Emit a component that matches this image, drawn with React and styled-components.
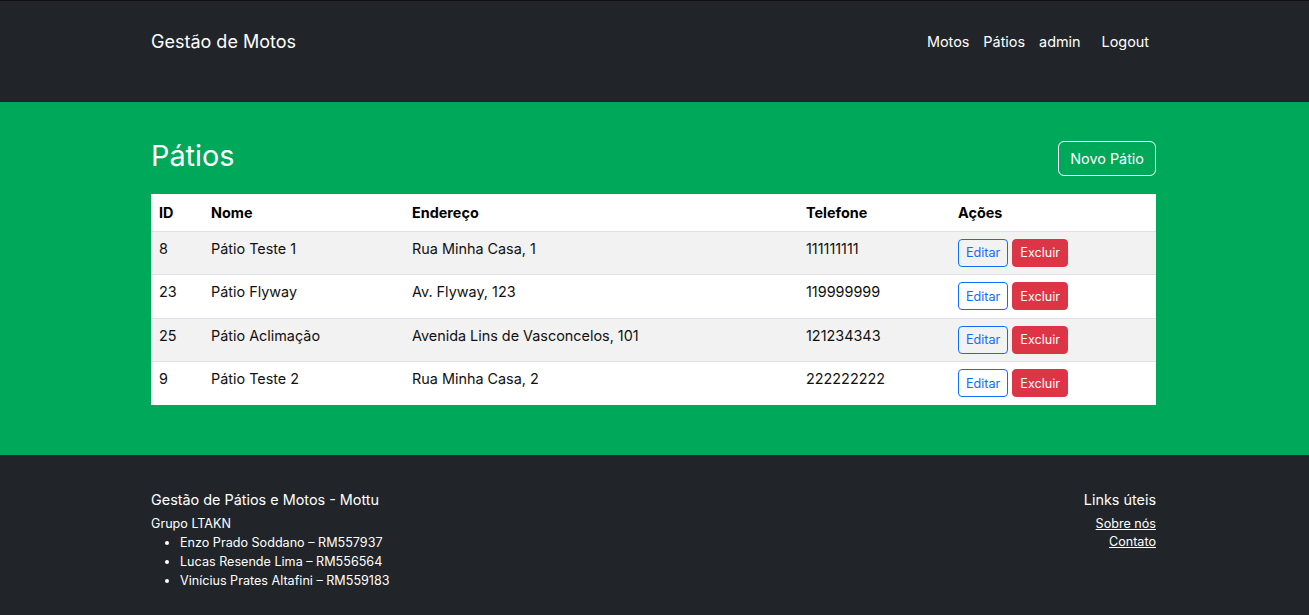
import React from 'react';
import styled, { createGlobalStyle } from 'styled-components';

const GlobalStyle = createGlobalStyle`
  * { box-sizing: border-box; }
  body {
    margin: 0;
    font-family: Inter, "Noto Sans", sans-serif;
    background: #212529;
    color: #212529;
  }
`;

const Header = styled.header`
  background-color: #212529;
  border-top: 1px solid #111;
  height: 102px;
  padding-top: 28px;
`;

const Container = styled.div`
  width: 1005px;
  margin-left: calc(50% - 503.5px);
`;

const NavBar = styled(Container)`
  display: flex;
  align-items: center;
  justify-content: space-between;
  height: 24px;
`;

const Brand = styled.a`
  color: #fff;
  font-size: 18px;
  text-decoration: none;
`;

const NavList = styled.ul`
  list-style: none;
  margin: 0;
  padding: 0;
  display: flex;
  align-items: center;
  gap: 14px;
  margin-right: 7px;
`;

const NavItem = styled.li`
  color: #fff;
  font-size: 14.4px;
  margin-left: ${props => (props.spaced ? '7px' : '0')};
`;

const Main = styled.main`
  background-color: #00a859;
  padding: 37px 0 50px;
`;

const TitleRow = styled.div`
  display: flex;
  justify-content: space-between;
  align-items: flex-start;
  margin-bottom: 18px;
`;

const Title = styled.h1`
  margin: 0;
  color: #fff;
  font-size: 28.8px;
  font-weight: 400;
  line-height: 1.2;
`;

const OutlineButton = styled.button`
  font-family: inherit;
  font-size: 14.4px;
  color: #fff;
  background: transparent;
  border: 1px solid #fff;
  border-radius: 6px;
  height: 35px;
  padding: 0 11px;
  margin-top: 2px;
`;

const Table = styled.table`
  width: 100%;
  border-collapse: collapse;
  background: #fff;
  font-size: 14.4px;
`;

const Th = styled.th`
  text-align: left;
  font-weight: 700;
  padding: 9px 8px 9px;
  height: 37px;
  color: #000;
  border-bottom: 1px solid #dee2e6;
`;

const Tr = styled.tr`
  background: ${props => (props.striped ? '#f2f2f2' : '#fff')};
  border-bottom: 1px solid #dee2e6;
  &:last-child { border-bottom: none; }
`;

const Td = styled.td`
  vertical-align: top;
  padding: 8px 8px 0;
  height: 43.5px;
  color: #111;
`;

const ActionCell = styled(Td)`
  padding-top: 7px;
`;

const SmallButton = styled.button`
  font-family: inherit;
  font-size: 12.6px;
  height: 28px;
  padding: 0 7px;
  border-radius: 4px;
  margin-right: 4px;
  border: 1px solid ${props => (props.danger ? '#dc3545' : '#0d6efd')};
  background: ${props => (props.danger ? '#dc3545' : 'transparent')};
  color: ${props => (props.danger ? '#fff' : '#0d6efd')};
`;

const Footer = styled.footer`
  background: #212529;
  color: #fff;
  padding: 36px 0 24px;
  height: 160px;
`;

const FooterRow = styled(Container)`
  display: flex;
  justify-content: space-between;
`;

const FooterTitle = styled.h5`
  margin: 0 0 6px;
  font-size: 14.4px;
  font-weight: 400;
  line-height: 18px;
`;

const FooterText = styled.div`
  font-size: 12.6px;
  line-height: 18px;
`;

const Members = styled.ul`
  margin: 0;
  padding-left: 29px;
  font-size: 12.6px;
  line-height: 19px;
`;

const LinksCol = styled.div`
  text-align: right;
`;

const FooterLink = styled.a`
  display: block;
  color: #fff;
  font-size: 12.6px;
  line-height: 18px;
  text-decoration: underline;
`;

const patios = [
  { id: 8, nome: 'Pátio Teste 1', endereco: 'Rua Minha Casa, 1', telefone: '111111111' },
  { id: 23, nome: 'Pátio Flyway', endereco: 'Av. Flyway, 123', telefone: '119999999' },
  { id: 25, nome: 'Pátio Aclimação', endereco: 'Avenida Lins de Vasconcelos, 101', telefone: '121234343' },
  { id: 9, nome: 'Pátio Teste 2', endereco: 'Rua Minha Casa, 2', telefone: '222222222' },
];

export default function App() {
  return (
    <>
      <GlobalStyle />
      <Header>
        <NavBar>
          <Brand href="#">Gestão de Motos</Brand>
          <NavList>
            <NavItem>Motos</NavItem>
            <NavItem>Pátios</NavItem>
            <NavItem>admin</NavItem>
            <NavItem spaced>Logout</NavItem>
          </NavList>
        </NavBar>
      </Header>

      <Main>
        <Container>
          <TitleRow>
            <Title>Pátios</Title>
            <OutlineButton>Novo Pátio</OutlineButton>
          </TitleRow>
          <Table>
            <colgroup>
              <col style={{ width: 52 }} />
              <col style={{ width: 201 }} />
              <col style={{ width: 394 }} />
              <col style={{ width: 152 }} />
              <col />
            </colgroup>
            <thead>
              <tr>
                <Th>ID</Th>
                <Th>Nome</Th>
                <Th>Endereço</Th>
                <Th>Telefone</Th>
                <Th>Ações</Th>
              </tr>
            </thead>
            <tbody>
              {patios.map((p, i) => (
                <Tr key={p.id} striped={i % 2 === 0}>
                  <Td>{p.id}</Td>
                  <Td>{p.nome}</Td>
                  <Td>{p.endereco}</Td>
                  <Td>{p.telefone}</Td>
                  <ActionCell>
                    <SmallButton>Editar</SmallButton>
                    <SmallButton danger>Excluir</SmallButton>
                  </ActionCell>
                </Tr>
              ))}
            </tbody>
          </Table>
        </Container>
      </Main>

      <Footer>
        <FooterRow>
          <div>
            <FooterTitle>Gestão de Pátios e Motos - Mottu</FooterTitle>
            <FooterText>Grupo LTAKN</FooterText>
            <Members>
              <li>Enzo Prado Soddano – RM557937</li>
              <li>Lucas Resende Lima – RM556564</li>
              <li>Vinícius Prates Altafini – RM559183</li>
            </Members>
          </div>
          <LinksCol>
            <FooterTitle>Links úteis</FooterTitle>
            <FooterLink href="#">Sobre nós</FooterLink>
            <FooterLink href="#">Contato</FooterLink>
          </LinksCol>
        </FooterRow>
      </Footer>
    </>
  );
}
